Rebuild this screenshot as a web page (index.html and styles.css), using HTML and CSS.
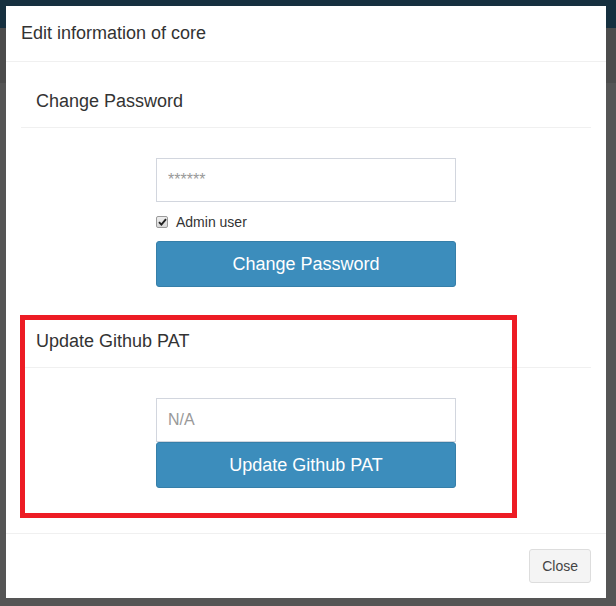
FILE: index.html
```html
<!DOCTYPE html>
<html lang="en">
<head>
<meta charset="utf-8">
<title>Edit information of core</title>
<link rel="stylesheet" href="styles.css">
</head>
<body>
<div class="backdrop">
  <div class="modal">
    <div class="modal-header">
      <h4 class="modal-title">Edit information of core</h4>
    </div>
    <div class="modal-body">
      <section class="section">
        <h3 class="section-heading">Change Password</h3>
        <div class="section-body">
          <form class="form">
            <input class="input" type="password" placeholder="******">
            <label class="checkbox">
              <span class="check">
                <svg width="9" height="8" viewBox="0 0 9 8"><path d="M1 4.2 L3.4 6.6 L8 1.2" fill="none" stroke="#222" stroke-width="1.9"/></svg>
              </span>
              Admin user
            </label>
            <button class="btn-primary" type="button">Change Password</button>
          </form>
        </div>
      </section>
      <section class="section">
        <h3 class="section-heading">Update Github PAT</h3>
        <div class="section-body">
          <form class="form">
            <input class="input" type="text" placeholder="N/A">
            <button class="btn-primary" type="button">Update Github PAT</button>
          </form>
        </div>
      </section>
      <div class="highlight"></div>
    </div>
    <div class="modal-footer">
      <button class="btn-default" type="button">Close</button>
    </div>
  </div>
</div>
</body>
</html>
```
FILE: styles.css
```css
* { box-sizing: border-box; }
html, body { margin: 0; padding: 0; }
body {
  width: 616px;
  height: 606px;
  overflow: hidden;
  font-family: "Liberation Sans", Arial, sans-serif;
  color: #333;
  background: linear-gradient(to bottom, #16303f 0, #16303f 28px, #4c4c4c 28px, #4c4c4c 83px, #555 83px, #555 100%);
}
.backdrop {
  padding: 6px 10px 0 6px;
}
.modal {
  width: 600px;
  background: #fff;
  display: flex;
  flex-direction: column;
}
.modal-header {
  padding: 15px;
  border-bottom: 1px solid #f0f0f0;
}
.modal-title {
  margin: 0;
  font-size: 18px;
  font-weight: normal;
  line-height: 25px;
  color: #333;
}
.modal-body {
  position: relative;
  padding: 15px;
}
.section-heading {
  margin: 0;
  padding: 11px 15px 13px;
  font-size: 18px;
  font-weight: normal;
  line-height: 26px;
  color: #333;
  border-bottom: 1px solid #f0f0f0;
}
.section-body {
  padding: 30px 0;
  display: flex;
  justify-content: center;
}
.form {
  width: 300px;
  display: flex;
  flex-direction: column;
}
.input {
  height: 44px;
  width: 100%;
  padding: 10px 11px;
  font-family: "Liberation Sans", Arial, sans-serif;
  font-size: 16px;
  color: #555;
  border: 1px solid #d2d6de;
  border-radius: 0;
  outline: none;
}
.input::placeholder { color: #999; }
.checkbox {
  display: flex;
  align-items: center;
  margin: 10px 0 9px;
  height: 20px;
  font-size: 14px;
  line-height: 20px;
  color: #333;
}
.check {
  width: 12px;
  height: 12px;
  margin-right: 8px;
  border: 1px solid #9a9a9a;
  border-radius: 2px;
  background: linear-gradient(#eee, #d8d8d8);
  display: flex;
  align-items: center;
  justify-content: center;
}
.btn-primary {
  height: 46px;
  width: 100%;
  font-family: "Liberation Sans", Arial, sans-serif;
  font-size: 18px;
  color: #fff;
  background: #3c8dbc;
  border: 1px solid #367fa9;
  border-radius: 3px;
  padding: 0 16px;
}
.highlight {
  position: absolute;
  left: 14px;
  top: 253px;
  width: 497px;
  height: 203px;
  border: 5px solid #ed1c24;
  pointer-events: none;
}
.modal-footer {
  padding: 15px;
  border-top: 1px solid #f0f0f0;
  display: flex;
  justify-content: flex-end;
}
.btn-default {
  height: 34px;
  padding: 0 12px;
  font-family: "Liberation Sans", Arial, sans-serif;
  font-size: 14px;
  color: #444;
  background: #f4f4f4;
  border: 1px solid #ddd;
  border-radius: 3px;
}
```
